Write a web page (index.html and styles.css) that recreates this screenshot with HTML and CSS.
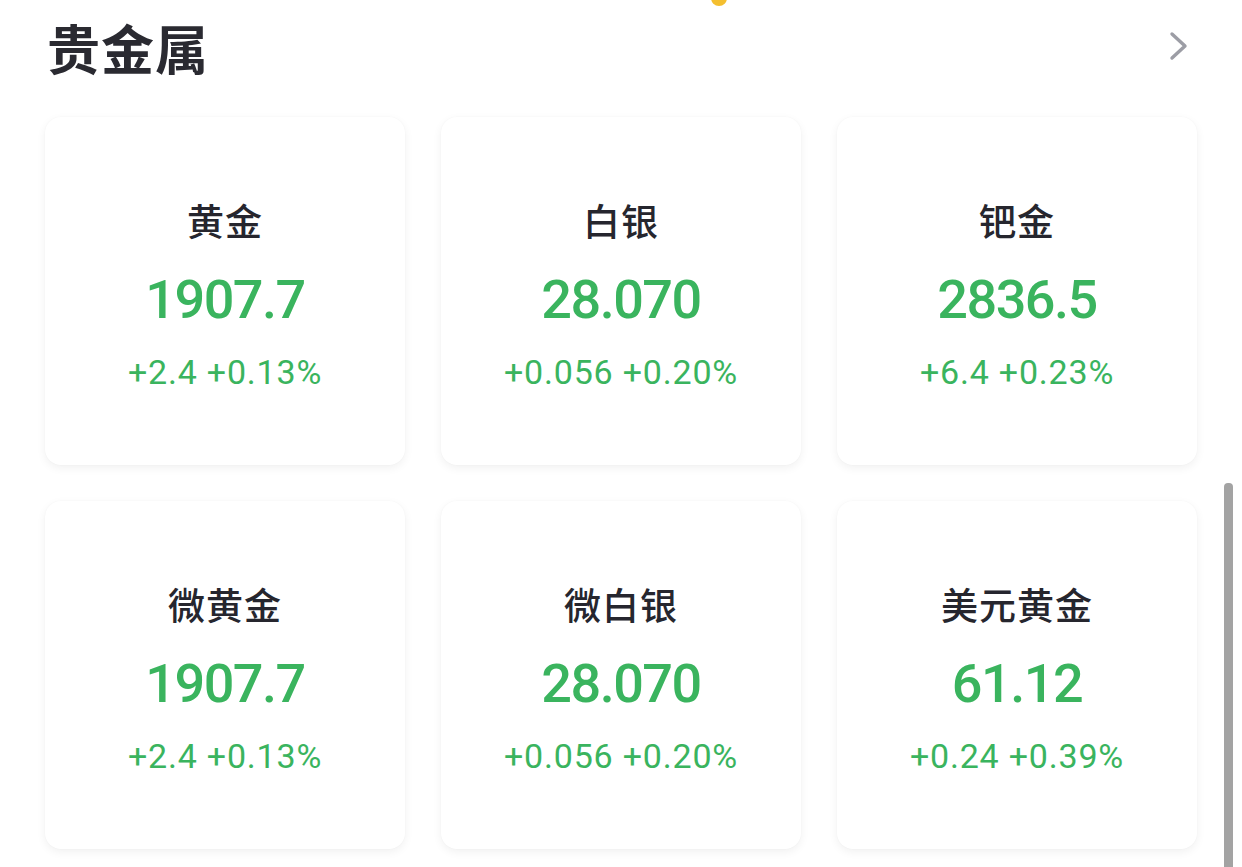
FILE: index.html
```html
<!DOCTYPE html>
<html lang="zh-CN">
<head>
<meta charset="utf-8">
<title>贵金属</title>
<link rel="stylesheet" href="styles.css">
</head>
<body>
<div class="page">
  <span class="dot"></span>
  <header class="header">
    <h1 class="title">贵金属</h1>
    <svg class="chevron" width="20" height="30" viewBox="0 0 20 30">
      <polyline points="3,3 16,15 3,27" fill="none" stroke="#9c9da5" stroke-width="3.4" stroke-linecap="round" stroke-linejoin="round"/>
    </svg>
  </header>
  <section class="grid">
    <div class="card"><div class="name">黄金</div><div class="price">1907.7</div><div class="change">+2.4 +0.13%</div></div>
    <div class="card"><div class="name">白银</div><div class="price">28.070</div><div class="change">+0.056 +0.20%</div></div>
    <div class="card"><div class="name">钯金</div><div class="price">2836.5</div><div class="change">+6.4 +0.23%</div></div>
    <div class="card"><div class="name">微黄金</div><div class="price">1907.7</div><div class="change">+2.4 +0.13%</div></div>
    <div class="card"><div class="name">微白银</div><div class="price">28.070</div><div class="change">+0.056 +0.20%</div></div>
    <div class="card"><div class="name">美元黄金</div><div class="price">61.12</div><div class="change">+0.24 +0.39%</div></div>
  </section>
  <div class="scrollbar"></div>
</div>
</body>
</html>
```
FILE: styles.css
```css
html, body {
  margin: 0;
  padding: 0;
  background: #ffffff;
}
.page {
  position: relative;
  width: 1242px;
  height: 867px;
  overflow: hidden;
  box-sizing: border-box;
  padding: 17px 45px 0 45px;
  font-family: "Noto Sans CJK SC", "Noto Sans", sans-serif;
}
.dot {
  position: absolute;
  left: 711px;
  top: -10px;
  width: 16px;
  height: 16px;
  border-radius: 50%;
  background: #f4bf2f;
}
.header {
  display: flex;
  align-items: center;
  justify-content: space-between;
  height: 60px;
  margin-bottom: 40px;
}
.title {
  margin: 0 0 0 2px;
  font-size: 53px;
  line-height: 60px;
  font-weight: 700;
  color: #2a2a31;
  letter-spacing: 1px;
}
.chevron {
  margin-right: 8px;
  margin-top: -2px;
}
.grid {
  display: grid;
  grid-template-columns: repeat(3, 360px);
  column-gap: 36px;
  row-gap: 36px;
}
.card {
  box-sizing: border-box;
  height: 348px;
  padding-top: 78px;
  border-radius: 16px;
  background: #ffffff;
  box-shadow: 0 3px 10px rgba(0, 0, 0, 0.06), 0 0 2px rgba(0, 0, 0, 0.03);
  display: flex;
  flex-direction: column;
  align-items: center;
}
.name {
  font-size: 37px;
  line-height: 50px;
  font-weight: 500;
  color: #26262e;
  letter-spacing: 1px;
}
.price {
  margin-top: 25px;
  font-family: Roboto, "Noto Sans", sans-serif;
  font-size: 54px;
  line-height: 60px;
  font-weight: 500;
  color: #3ab45e;
  letter-spacing: -1.5px;
}
.change {
  margin-top: 22px;
  font-family: Roboto, "Noto Sans", sans-serif;
  font-size: 34px;
  line-height: 40px;
  font-weight: 400;
  color: #3ab45e;
  letter-spacing: 0.8px;
}
.scrollbar {
  position: absolute;
  left: 1224px;
  top: 483px;
  width: 9px;
  bottom: 0;
  background: #a3a3a3;
  border-radius: 4px 4px 0 0;
}
```
